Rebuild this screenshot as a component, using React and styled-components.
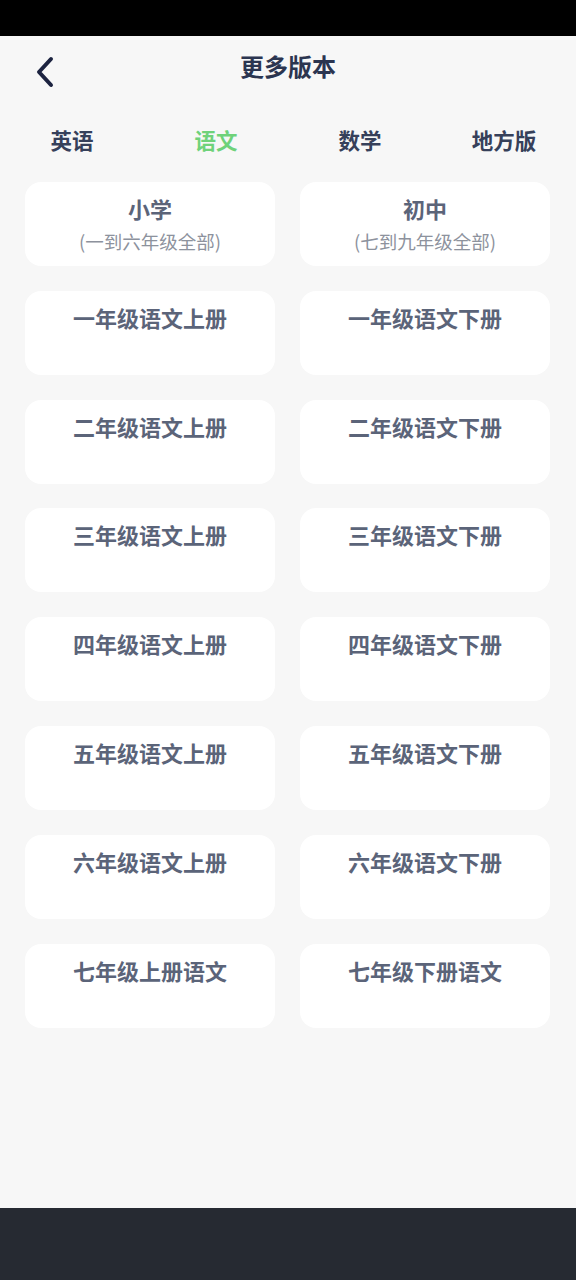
import React from "react";
import styled, { createGlobalStyle } from "styled-components";

const Global = createGlobalStyle`
  html, body { margin: 0; padding: 0; }
  body {
    background: #f7f7f7;
    font-family: "Noto Sans CJK SC", "Noto Sans", sans-serif;
  }
`;

const Screen = styled.div`
  width: 576px;
  height: 1280px;
  display: flex;
  flex-direction: column;
  background: #f7f7f7;
`;

const StatusBar = styled.div`
  height: 36px;
  background: #000;
  flex: none;
`;

const Header = styled.div`
  position: relative;
  height: 64px;
  display: flex;
  align-items: center;
  justify-content: center;
  flex: none;
`;

const BackButton = styled.button`
  position: absolute;
  left: 30px;
  top: 18px;
  width: 30px;
  height: 36px;
  padding: 0;
  border: 0;
  background: transparent;
  display: flex;
  align-items: center;
  justify-content: center;
`;

const Title = styled.div`
  font-size: 24px;
  font-weight: 700;
  color: #2b3550;
  line-height: 30px;
  margin-top: -4px;
`;

const Tabs = styled.div`
  display: grid;
  grid-template-columns: repeat(4, 1fr);
  height: 50px;
  margin-top: 14px;
  flex: none;
`;

const Tab = styled.div`
  display: flex;
  align-items: center;
  justify-content: center;
  font-size: 21.5px;
  font-weight: 700;
  color: ${(p) => (p.$active ? "#6fd27a" : "#36405a")};
`;

const Grid = styled.div`
  display: grid;
  grid-template-columns: 250px 250px;
  column-gap: 25px;
  row-gap: 24.8px;
  padding: 18px 25px 0 25px;
`;

const Card = styled.div`
  height: 84px;
  background: #fff;
  border-radius: 16px;
  display: flex;
  flex-direction: column;
  align-items: center;
  padding-top: 11px;
  box-sizing: border-box;
`;

const CardTitle = styled.div`
  font-size: 22px;
  font-weight: 700;
  color: #5b6479;
  line-height: 30px;
`;

const CardSub = styled.div`
  font-size: 18.5px;
  color: #8d929d;
  line-height: 26px;
  margin-top: 5px;
`;

const Spacer = styled.div`
  flex: 1;
`;

const BottomBar = styled.div`
  height: 72px;
  background: #262a32;
  flex: none;
`;

const levels = [
  { title: "小学", sub: "(一到六年级全部)" },
  { title: "初中", sub: "(七到九年级全部)" },
];

const grades = ["一", "二", "三", "四", "五", "六"];

const books = [];
grades.forEach((g) => {
  books.push(`${g}年级语文上册`);
  books.push(`${g}年级语文下册`);
});
books.push("七年级上册语文");
books.push("七年级下册语文");

export default function App() {
  return (
    <>
      <Global />
      <Screen>
        <StatusBar />
        <Header>
          <BackButton aria-label="back">
            <svg width="22" height="32" viewBox="0 0 22 32">
              <path
                d="M17 3 L5 16 L17 29"
                fill="none"
                stroke="#1c2340"
                strokeWidth="4"
                strokeLinecap="round"
                strokeLinejoin="round"
              />
            </svg>
          </BackButton>
          <Title>更多版本</Title>
        </Header>
        <Tabs>
          <Tab>英语</Tab>
          <Tab $active>语文</Tab>
          <Tab>数学</Tab>
          <Tab>地方版</Tab>
        </Tabs>
        <Grid>
          {levels.map((l) => (
            <Card key={l.title}>
              <CardTitle>{l.title}</CardTitle>
              <CardSub>{l.sub}</CardSub>
            </Card>
          ))}
          {books.map((b) => (
            <Card key={b}>
              <CardTitle>{b}</CardTitle>
            </Card>
          ))}
        </Grid>
        <Spacer />
        <BottomBar />
      </Screen>
    </>
  );
}
